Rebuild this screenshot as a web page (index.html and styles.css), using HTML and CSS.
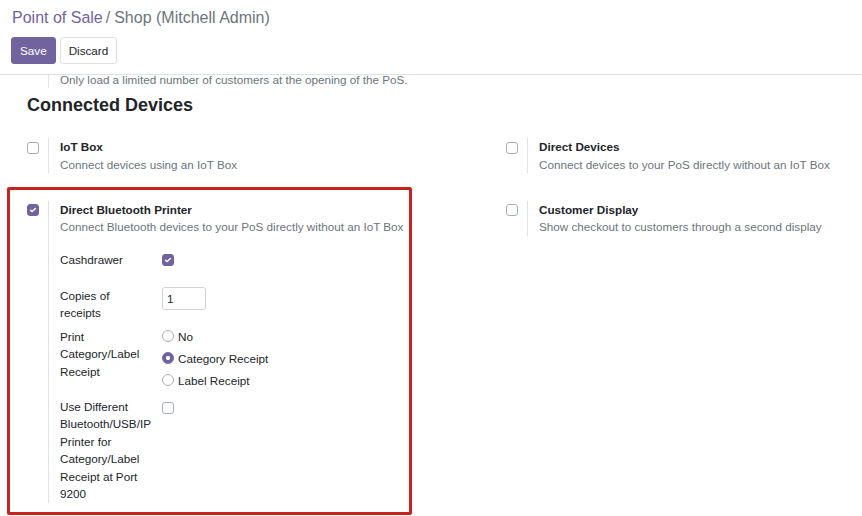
FILE: index.html
```html
<!DOCTYPE html>
<html lang="en">
<head>
<meta charset="utf-8">
<title>Point of Sale / Shop (Mitchell Admin)</title>
<link rel="stylesheet" href="styles.css">
</head>
<body>
<div class="control-panel">
  <div class="breadcrumb">
    <a class="crumb-link" href="#">Point of Sale</a><span class="crumb-sep">/</span><span class="crumb-current">Shop (Mitchell Admin)</span>
  </div>
  <div class="buttons">
    <button class="btn btn-primary">Save</button>
    <button class="btn btn-secondary">Discard</button>
  </div>
</div>

<div class="content">
  <div class="prev-setting">
    <div class="left-pane"></div>
    <div class="right-pane">
      <div class="desc">Only load a limited number of customers at the opening of the PoS.</div>
    </div>
  </div>

  <h2 class="section-title">Connected Devices</h2>

  <div class="settings-grid">
    <div class="setting">
      <div class="left-pane"><span class="checkbox"></span></div>
      <div class="right-pane">
        <div class="title">IoT Box</div>
        <div class="desc">Connect devices using an IoT Box</div>
      </div>
    </div>

    <div class="setting">
      <div class="left-pane"><span class="checkbox"></span></div>
      <div class="right-pane">
        <div class="title">Direct Devices</div>
        <div class="desc">Connect devices to your PoS directly without an IoT Box</div>
      </div>
    </div>

    <div class="setting setting-highlight">
      <div class="left-pane"><span class="checkbox checked"><svg viewBox="0 0 12 12" width="12" height="12"><path d="M3.6 6.2 L5.2 7.6 L8.4 4.6" fill="none" stroke="#fff" stroke-width="1.4" stroke-linecap="round" stroke-linejoin="round"/></svg></span></div>
      <div class="right-pane">
        <div class="title">Direct Bluetooth Printer</div>
        <div class="desc">Connect Bluetooth devices to your PoS directly without an IoT Box</div>

        <div class="field-row row-cash">
          <div class="field-label">Cashdrawer</div>
          <div class="field-value"><span class="checkbox checked"><svg viewBox="0 0 12 12" width="12" height="12"><path d="M3.6 6.2 L5.2 7.6 L8.4 4.6" fill="none" stroke="#fff" stroke-width="1.4" stroke-linecap="round" stroke-linejoin="round"/></svg></span></div>
        </div>

        <div class="field-row row-copies">
          <div class="field-label">Copies of receipts</div>
          <div class="field-value"><input class="num-input" type="text" value="1"></div>
        </div>

        <div class="field-row row-print">
          <div class="field-label">Print Category/Label Receipt</div>
          <div class="field-value radios">
            <label class="radio-item"><span class="radio"></span>No</label>
            <label class="radio-item"><span class="radio checked"></span>Category Receipt</label>
            <label class="radio-item"><span class="radio"></span>Label Receipt</label>
          </div>
        </div>

        <div class="field-row row-use">
          <div class="field-label">Use Different Bluetooth/USB/IP Printer for Category/Label Receipt at Port 9200</div>
          <div class="field-value"><span class="checkbox"></span></div>
        </div>
      </div>
      <div class="highlight-frame"></div>
    </div>

    <div class="setting">
      <div class="left-pane"><span class="checkbox"></span></div>
      <div class="right-pane">
        <div class="title">Customer Display</div>
        <div class="desc">Show checkout to customers through a second display</div>
      </div>
    </div>
  </div>
</div>
</body>
</html>
```

FILE: styles.css
```css
* {
  box-sizing: border-box;
}

html, body {
  margin: 0;
  padding: 0;
  background: #ffffff;
}

body {
  font-family: "Liberation Sans", Arial, sans-serif;
  font-size: 11.7px;
  line-height: 17.55px;
  color: #212529;
  height: 516px;
  overflow: hidden;
}

/* ---------- control panel ---------- */
.control-panel {
  padding: 7px 0 10px 11px;
  border-bottom: 1px solid #dee2e6;
}

.breadcrumb {
  font-size: 16px;
  line-height: 22px;
  height: 22px;
  white-space: nowrap;
}

.crumb-link {
  color: #71639e;
  text-decoration: none;
  margin-left: 1px;
}

.crumb-sep {
  color: #6c757d;
  margin: 0 4px 0 3px;
}

.crumb-current {
  color: #6c757d;
}

.buttons {
  display: flex;
  gap: 4px;
  margin-top: 8px;
}

.btn {
  font-family: inherit;
  font-size: 11.7px;
  height: 27px;
  padding: 0 8px;
  border-radius: 3px;
  border: 1px solid transparent;
  cursor: pointer;
}

.btn-primary {
  background: #71639e;
  border-color: #71639e;
  color: #ffffff;
}

.btn-secondary {
  background: #ffffff;
  border-color: #dee2e6;
  color: #212529;
}

/* ---------- content ---------- */
.content {
  height: 441px;
  overflow: hidden;
  position: relative;
}

.prev-setting {
  display: flex;
  margin-top: -4.3px;
  padding-left: 27px;
}

.left-pane {
  width: 21px;
  flex: none;
}

.right-pane {
  border-left: 1px solid #dee2e6;
  padding-left: 11px;
  flex: 1;
  min-width: 0;
}

.section-title {
  margin: 6.4px 0 0 27px;
  font-size: 18px;
  line-height: 21.6px;
  font-weight: bold;
  color: #212529;
}

.settings-grid {
  display: grid;
  grid-template-columns: 479px 1fr;
  row-gap: 27.4px;
  padding-left: 27px;
  margin-top: 21.9px;
  align-items: start;
}

.setting {
  display: flex;
  position: relative;
}

.title {
  font-weight: bold;
  color: #212529;
}

.desc {
  color: #6c757d;
  white-space: nowrap;
}

/* ---------- checkbox / radio ---------- */
.checkbox {
  display: block;
  width: 12px;
  height: 12px;
  border: 1px solid #a8adb3;
  border-radius: 3px;
  background: #ffffff;
}

.left-pane .checkbox {
  margin-top: 3.6px;
}

.checkbox.checked {
  background: #71639e;
  border-color: #71639e;
  position: relative;
}

.checkbox.checked svg {
  position: absolute;
  left: -1px;
  top: -1px;
}

.radio {
  display: block;
  width: 12px;
  height: 12px;
  border: 1px solid #a8adb3;
  border-radius: 50%;
  background: #ffffff;
  flex: none;
}

.radio.checked {
  border-color: #71639e;
  background: radial-gradient(circle, #ffffff 0 1.8px, #71639e 2.4px);
}

/* ---------- sub fields ---------- */
.field-row {
  display: grid;
  grid-template-columns: 102px 1fr;
}

.field-label {
  padding-right: 10px;
  color: #212529;
}

.row-cash {
  margin-top: 15px;
}

.row-cash .checkbox {
  margin-top: 3px;
}

.row-copies {
  margin-top: 18.4px;
}

.num-input {
  display: block;
  width: 44px;
  height: 23px;
  border: 1px solid #cfd2d6;
  border-radius: 3px;
  padding: 0 4px;
  font-family: inherit;
  font-size: 11.7px;
  color: #212529;
  background: #ffffff;
}

.row-print {
  margin-top: 5.9px;
}

.radios {
  display: flex;
  flex-direction: column;
  gap: 4.45px;
}

.radio-item {
  display: flex;
  align-items: center;
  gap: 4px;
  height: 17.55px;
  color: #212529;
}

.row-use {
  margin-top: 8.4px;
}

.row-use .checkbox {
  margin-top: 4px;
}

/* ---------- annotation frame ---------- */
.highlight-frame {
  position: absolute;
  top: -14px;
  left: -20px;
  right: 94px;
  bottom: -12px;
  border: 3px solid #c9211e;
  border-radius: 2px;
  pointer-events: none;
}
```
